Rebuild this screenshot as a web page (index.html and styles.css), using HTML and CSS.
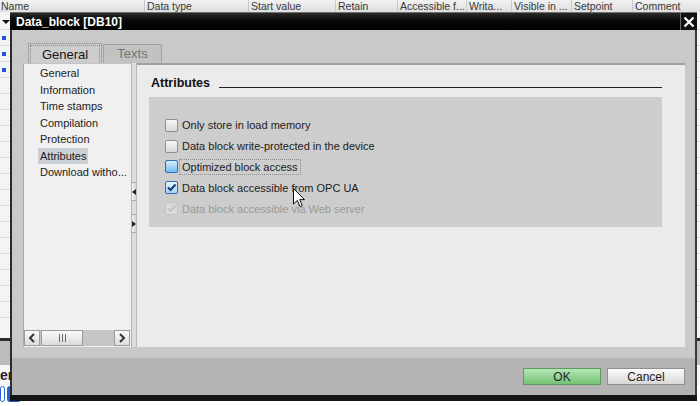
FILE: index.html
```html
<!DOCTYPE html>
<html lang="en">
<head>
    <meta charset="UTF-8">
    <title>Data_block [DB10]</title>
    <link rel="stylesheet" href="styles.css">
</head>
<body>
    <div class="table-head">
        <div class="col" style="width:145px">Name</div>
        <div class="col" style="width:104px">Data type</div>
        <div class="col" style="width:87px">Start value</div>
        <div class="col" style="width:62px">Retain</div>
        <div class="col" style="width:69px">Accessible f...</div>
        <div class="col" style="width:45px">Writa...</div>
        <div class="col" style="width:60px">Visible in ...</div>
        <div class="col" style="width:61px">Setpoint</div>
        <div class="col col-last">Comment</div>
    </div>
    <div class="table-rows">
        <div class="row row-first"><span class="expander"></span></div>
        <div class="row"><span class="dot"></span></div>
        <div class="row"><span class="dot"></span></div>
        <div class="row"><span class="dot"></span></div>
        <div class="row"></div><div class="row"></div><div class="row"></div><div class="row"></div>
        <div class="row"></div><div class="row"></div><div class="row"></div><div class="row"></div>
        <div class="row"></div><div class="row"></div><div class="row"></div><div class="row"></div>
        <div class="row"></div><div class="row"></div><div class="row"></div>
    </div>
    <div class="split-bar"></div>
    <div class="gray-band"></div>
    <div class="prop-title">er</div>
    <div class="prop-tabs"><span class="pill pill-a"></span><span class="pill pill-b"></span></div>

    <div class="dialog">
        <div class="dlg-title">
            <span class="dlg-caption">Data_block [DB10]</span>
            <span class="close">
                <svg width="12" height="12" viewBox="0 0 12 12"><path d="M1.5 1.5 L10.5 10.5 M10.5 1.5 L1.5 10.5" stroke="#fff" stroke-width="2.2"/></svg>
            </span>
        </div>
        <div class="dlg-body">
            <div class="tabs">
                <div class="tab tab-active"><span>General</span></div>
                <div class="tab">Texts</div>
            </div>
            <div class="panel">
                <div class="nav">
                    <ul class="nav-list">
                        <li>General</li>
                        <li>Information</li>
                        <li>Time stamps</li>
                        <li>Compilation</li>
                        <li>Protection</li>
                        <li class="selected">Attributes</li>
                        <li>Download witho...</li>
                    </ul>
                    <div class="hscroll">
                        <span class="sb-btn">
                            <svg width="8" height="10" viewBox="0 0 8 10"><path d="M6 1 L2 5 L6 9" fill="none" stroke="#333" stroke-width="2"/></svg>
                        </span>
                        <span class="sb-thumb">
                            <svg width="7" height="8" viewBox="0 0 7 8"><path d="M0.5 0 V8 M3.5 0 V8 M6.5 0 V8" stroke="#6a6a6a" stroke-width="1"/></svg>
                        </span>
                        <span class="sb-track"></span>
                        <span class="sb-btn">
                            <svg width="8" height="10" viewBox="0 0 8 10"><path d="M2 1 L6 5 L2 9" fill="none" stroke="#333" stroke-width="2"/></svg>
                        </span>
                    </div>
                </div>
                <div class="splitter">
                    <span class="split-btn"><svg width="4" height="6" viewBox="0 0 4 6"><path d="M4 0 L0 3 L4 6 Z" fill="#222"/></svg></span>
                    <span class="split-btn"><svg width="4" height="6" viewBox="0 0 4 6"><path d="M0 0 L4 3 L0 6 Z" fill="#222"/></svg></span>
                </div>
                <div class="content">
                    <div class="section-head">
                        <h3>Attributes</h3>
                        <span class="rule"></span>
                    </div>
                    <div class="group">
                        <label class="check"><span class="box"></span><span>Only store in load memory</span></label>
                        <label class="check"><span class="box"></span><span>Data block write-protected in the device</span></label>
                        <label class="check"><span class="box box-focus"></span><span class="focus-label">Optimized block access</span></label>
                        <label class="check"><span class="box box-checked"><svg width="11" height="11" viewBox="0 0 11 11"><path d="M2 5.5 L4.5 8 L9.5 2.5" fill="none" stroke="#163f7e" stroke-width="2.2"/></svg></span><span>Data block accessible from OPC UA</span></label>
                        <label class="check check-disabled"><span class="box box-disabled"><svg width="11" height="11" viewBox="0 0 11 11"><path d="M2 5.5 L4.5 8 L9.5 2.5" fill="none" stroke="#c4c4c4" stroke-width="2.2"/></svg></span><span>Data block accessible via Web server</span></label>
                    </div>
                </div>
            </div>
        </div>
        <div class="dlg-footer">
            <button class="btn btn-ok">OK</button>
            <button class="btn">Cancel</button>
        </div>
    </div>

    <svg class="cursor" width="13" height="20" viewBox="0 0 13 20">
        <path d="M0.5 0.5 L0.5 16 L4.3 12.4 L7 18.6 L9.3 17.6 L6.7 11.6 L11.5 11.6 Z" fill="#fff" stroke="#111" stroke-width="1"/>
    </svg>
</body>
</html>
```

FILE: styles.css
```css
body {
    margin: 0;
    width: 700px;
    height: 406px;
    overflow: hidden;
    position: relative;
    font-family: 'Liberation Sans', Arial, sans-serif;
    font-size: 11px;
    color: #222;
    background-color: #f4f4f4;
}

/* background editor table */
.table-head {
    display: flex;
    height: 12px;
    line-height: 12px;
    font-size: 10.5px;
    background: linear-gradient(#f2f2f2, #dedede);
    color: #3a3a3a;
    overflow: hidden;
}
.col {
    flex: none;
    padding-left: 2px;
    box-sizing: border-box;
    border-right: 1px solid #c8c8c8;
    white-space: nowrap;
    overflow: hidden;
}
.col:first-child {
    padding-left: 1px;
}
.col-last {
    flex: 1;
    border-right: none;
}
.table-rows {
    height: 326px;
    overflow: hidden;
}
.row {
    height: 15px;
    border-bottom: 1px solid #dadada;
    position: relative;
}
.row-first {
    height: 17px;
}
.expander {
    position: absolute;
    left: 2px;
    top: 8px;
    border-left: 4px solid transparent;
    border-right: 4px solid transparent;
    border-top: 4px solid #111;
}
.dot {
    position: absolute;
    left: 2px;
    top: 6px;
    width: 4px;
    height: 4px;
    background-color: #2450d8;
}
.split-bar {
    height: 3px;
    background-color: #2a2a2a;
}
.gray-band {
    height: 24px;
    background-color: #bcbcbc;
}
.prop-title {
    height: 20px;
    line-height: 20px;
    background-color: #f6f6f6;
    font-size: 14px;
    font-weight: bold;
    color: #222;
}
.prop-tabs {
    display: flex;
    gap: 2px;
    padding-top: 1px;
    background-color: #fff;
    height: 20px;
}
.pill {
    height: 16px;
    border: 1px solid #2a5fd0;
    border-radius: 3px;
    box-sizing: border-box;
}
.pill-a {
    width: 5px;
}
.pill-b {
    width: 14px;
    border-left-width: 3px;
}

/* dialog window */
.dialog {
    position: absolute;
    left: 10px;
    top: 12px;
    width: 687px;
    display: flex;
    flex-direction: column;
    border-top: 1px solid #707070;
    border-bottom: 6px solid #141414;
}
.dlg-title {
    height: 17px;
    display: flex;
    align-items: center;
    justify-content: space-between;
    background: linear-gradient(#2a2a2a, #0a0a0a 40%, #000);
    color: #fff;
    font-size: 12px;
    font-weight: bold;
    padding-left: 6px;
}
.close {
    width: 16px;
    height: 17px;
    display: flex;
    align-items: center;
    justify-content: center;
    border-left: 1px solid #6a6a6a;
    background-color: #111;
}
.dlg-body {
    background-color: #c9c9c9;
    border-left: 2px solid #2c2c2c;
    border-right: 2px solid #3a3a3a;
    padding: 13px 10px 11px 11px;
}
.tabs {
    display: flex;
    height: 20px;
    padding-left: 5px;
    gap: 1px;
}
.tab {
    width: 59px;
    box-sizing: border-box;
    border: 1px solid #a2a2a2;
    border-bottom: none;
    margin-top: 1px;
    background-color: #c2c2c2;
    color: #747474;
    font-size: 13px;
    text-align: center;
    line-height: 18px;
}
.tab-active {
    width: 74px;
    margin-top: 0;
    padding: 1px;
    background-color: #cdcdcd;
    color: #151515;
}
.tab-active span {
    display: block;
    height: 18px;
    line-height: 18px;
    border: 1px dotted #8a8a8a;
    border-bottom: none;
    box-sizing: border-box;
}
.panel {
    height: 284px;
    display: grid;
    grid-template-columns: 108px 6px 1fr;
}
.nav {
    background-color: #f0f0f0;
    border-left: 1px solid #aaa;
    border-top: 1px solid #c4c4c4;
    display: flex;
    flex-direction: column;
}
.nav-list {
    list-style: none;
    margin: 0;
    padding: 1px 0 0 16px;
    flex: 1;
}
.nav-list li {
    height: 16.5px;
    line-height: 16.5px;
    white-space: nowrap;
}
.nav-list .selected {
    display: inline-block;
    background-color: #cbd0d6;
    padding: 0 2px;
    margin-left: -2px;
}
.hscroll {
    display: flex;
    height: 16px;
    margin: 0 1px 1px 0;
    background-color: #c6c6c6;
}
.sb-btn, .sb-thumb {
    display: flex;
    align-items: center;
    justify-content: center;
    box-sizing: border-box;
    border: 1px solid #9c9c9c;
    background: linear-gradient(#fafafa, #dcdcdc);
}
.sb-btn {
    width: 16px;
}
.sb-thumb {
    width: 42px;
    margin-left: 1px;
}
.sb-track {
    flex: 1;
}
.splitter {
    background-color: #dedede;
    border-left: 1px solid #b2b2b2;
    border-right: 1px solid #b8b8b8;
    display: flex;
    flex-direction: column;
    padding-top: 119px;
    gap: 13px;
}
.split-btn {
    height: 17px;
    display: flex;
    align-items: center;
    background: linear-gradient(90deg, #f4f4f4, #d0d0d0);
    border-top: 1px solid #aaa;
    border-bottom: 1px solid #aaa;
}
.content {
    background-color: #ebebeb;
    border-top: 2px solid #a0a0a0;
    padding: 10px 23px 0 12px;
}
.section-head {
    display: flex;
    height: 16px;
    align-items: flex-end;
}
.section-head h3 {
    margin: 0 0 0 2px;
    font-size: 12.5px;
    line-height: 16px;
    color: #111;
}
.rule {
    flex: 1;
    margin: 0 0 3px 9px;
    border-top: 1px solid #1e1e1e;
}
.group {
    margin-top: 6px;
    background-color: #cdcdcd;
    padding: 18px 0 8px 16px;
}
.check {
    display: flex;
    align-items: center;
    gap: 4px;
    height: 20.8px;
    color: #1c1c1c;
}
.box {
    width: 13px;
    height: 13px;
    box-sizing: border-box;
    border: 1px solid #8e8e8e;
    border-radius: 2px;
    background: linear-gradient(#f7f7f7, #d9d9d9);
    display: flex;
    align-items: center;
    justify-content: center;
}
.box-focus {
    border-color: #2e6db4;
    background: linear-gradient(#d6eeff, #72bdf4);
}
.box-checked {
    border-color: #2e6db4;
    background: linear-gradient(#e8f4ff, #a6d4f7);
}
.box-disabled {
    border-color: #c2c2c2;
    background: #dadada;
}
.focus-label {
    outline: 1px dotted #8c8c8c;
    padding: 1px 2px;
    margin-left: -2px;
}
.check-disabled {
    color: #9a9a9a;
}
.dlg-footer {
    height: 37px;
    background-color: #b4b4b4;
    border-left: 2px solid #2c2c2c;
    border-right: 2px solid #3a3a3a;
    display: flex;
    justify-content: flex-end;
    align-items: flex-start;
    padding: 10px 10px 0 0;
    gap: 6px;
    box-sizing: border-box;
}
.btn {
    width: 78px;
    height: 17px;
    padding: 0;
    font-family: 'Liberation Sans', Arial, sans-serif;
    font-size: 12px;
    color: #222;
    border: 1px solid #8f8f8f;
    background: linear-gradient(#fbfbfb, #d8d8d8);
}
.btn-ok {
    border-color: #5e9c5e;
    background: linear-gradient(#b6e4b6, #74c474);
}
.cursor {
    position: absolute;
    left: 293px;
    top: 188px;
}
```
